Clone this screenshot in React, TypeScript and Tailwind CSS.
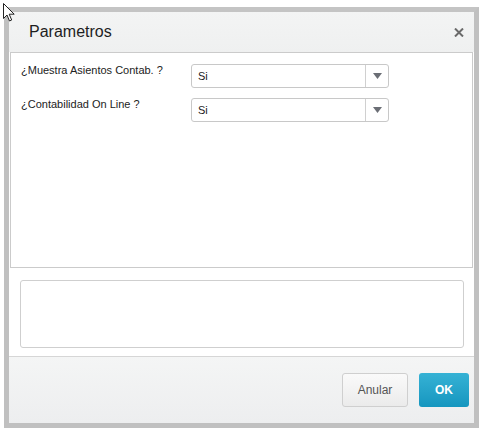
import React from "react";

function Select({ value }: { value: string }) {
  return (
    <div className="flex h-[24px] w-[198px] items-stretch rounded-[3px] border border-[#c8c8c8] bg-white">
      <div className="flex flex-1 items-center pl-[6px] text-[11px] text-[#222]">{value}</div>
      <div className="flex w-[23px] items-center justify-center border-l border-[#d0d0d0]">
        <svg width="9" height="6" viewBox="0 0 9 6">
          <path d="M0 0h9L4.5 6z" fill="#6b6e75" />
        </svg>
      </div>
    </div>
  );
}

const rows = [
  { label: "¿Muestra Asientos Contab. ?", value: "Si" },
  { label: "¿Contabilidad On Line ?", value: "Si" },
];

export default function App() {
  return (
    <div
      className="relative h-[428px] w-[480px] overflow-hidden bg-white"
      style={{ fontFamily: '"Liberation Sans", Arial, sans-serif' }}
    >
      {/* mouse pointer */}
      <svg className="absolute left-[3px] top-[3px] z-10" width="14" height="20" viewBox="0 0 14 20">
        <path
          d="M0.5 0.5v15l3.5-3.5 2.5 6 2.2-1-2.5-5.8h5z"
          fill="#fff"
          stroke="#222"
          strokeWidth="1"
          strokeLinejoin="round"
        />
      </svg>

      <div className="ml-[4px] mt-[7px] flex h-[421px] w-[475px] flex-col border-[5px] border-b-0 border-[#c0c0c0] border-t-[#c4c4c4]">
        <div className="flex h-full flex-col border-b-[5px] border-[#c0c0c0]">
          {/* header */}
          <div className="flex h-[40px] shrink-0 items-center justify-between bg-gradient-to-b from-[#f3f4f4] to-[#eff0f0] pl-[20px] pr-[10px]">
            <span className="text-[16px] text-[#1e1e1e]">Parametros</span>
            <svg width="10" height="9" viewBox="0 0 10 9" className="mt-[1px]">
              <path d="M1 0.5l8 8M9 0.5l-8 8" stroke="#6a6a6a" strokeWidth="2" />
            </svg>
          </div>

          {/* content panel */}
          <div className="mx-[1px] h-[216px] shrink-0 border border-[#cbcbcb] bg-white pl-[10px] pt-[11px]">
            <div className="flex flex-col gap-[10px]">
              {rows.map((r) => (
                <div key={r.label} className="flex items-start">
                  <div className="w-[170px] text-[11px] leading-[13px] text-[#222]">{r.label}</div>
                  <Select value={r.value} />
                </div>
              ))}
            </div>
          </div>

          {/* message box */}
          <div className="shrink-0 bg-white pb-[8px] pl-[11px] pr-[10px] pt-[12px]">
            <div className="h-[68px] rounded-[3px] border border-[#cfcfcf] bg-white" />
          </div>

          {/* footer */}
          <div className="flex flex-1 items-center justify-end gap-[11px] border-t border-[#d6d6d6] bg-gradient-to-b from-[#f4f5f5] to-[#edeeef] pr-[5px]">
            <button className="h-[34px] w-[66px] rounded-[3px] border border-[#cfcfcf] bg-gradient-to-b from-[#fafafa] to-[#ebebeb] text-[12px] text-[#555]">
              Anular
            </button>
            <button className="h-[34px] w-[50px] rounded-[3px] bg-gradient-to-b from-[#35b2d5] to-[#1496bf] text-[12px] font-bold text-white">
              OK
            </button>
          </div>
        </div>
      </div>
    </div>
  );
}
